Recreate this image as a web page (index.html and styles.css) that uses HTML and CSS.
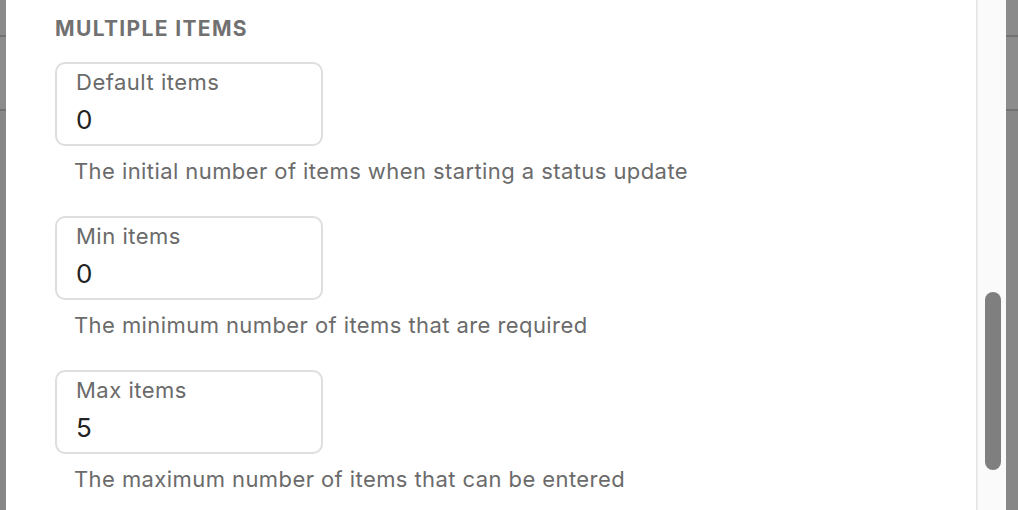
FILE: index.html
```html
<!DOCTYPE html>
<html lang="en">
<head>
<meta charset="utf-8">
<title>Multiple items</title>
<link rel="stylesheet" href="styles.css">
</head>
<body>
<div class="backdrop">
  <div class="seg seg-top"></div>
  <div class="seg seg-mid"></div>
  <div class="seg seg-rest"></div>
</div>
<main class="panel">
  <h2 class="section-title">MULTIPLE ITEMS</h2>
  <div class="field">
    <div class="box">
      <div class="label">Default items</div>
      <div class="value">0</div>
    </div>
    <p class="help">The initial number of items when starting a status update</p>
  </div>
  <div class="field">
    <div class="box">
      <div class="label">Min items</div>
      <div class="value">0</div>
    </div>
    <p class="help">The minimum number of items that are required</p>
  </div>
  <div class="field">
    <div class="box">
      <div class="label">Max items</div>
      <div class="value">5</div>
    </div>
    <p class="help">The maximum number of items that can be entered</p>
  </div>
</main>
<div class="track">
  <div class="thumb"></div>
</div>
<div class="backdrop backdrop-right">
  <div class="seg seg-top"></div>
  <div class="seg seg-mid"></div>
  <div class="seg seg-rest"></div>
</div>
</body>
</html>
```

FILE: styles.css
```css
html, body {
  margin: 0;
  padding: 0;
}
body {
  display: flex;
  height: 510px;
  overflow: hidden;
  background: #878787;
  font-family: Inter, "Noto Sans", sans-serif;
}
.backdrop {
  width: 6px;
  flex: none;
  display: flex;
  flex-direction: column;
  background: #878787;
}
.backdrop-right {
  width: 12px;
}
.seg-top {
  height: 35px;
  border-bottom: 2px solid #727272;
  background: #8a8a8a;
}
.seg-mid {
  height: 72px;
  border-bottom: 2px solid #727272;
  background: #8c8c8c;
}
.seg-rest {
  flex: 1;
}
.panel {
  flex: 1;
  background: #ffffff;
  padding: 17px 0 0 49px;
  border-right: 1px solid #e6e6e6;
}
.section-title {
  margin: 0 0 21px 0;
  font-size: 21px;
  line-height: 24px;
  font-weight: 700;
  color: #717171;
  letter-spacing: 1.35px;
}
.field {
  margin-bottom: 33px;
}
.box {
  width: 264px;
  height: 80px;
  box-sizing: content-box;
  border: 2px solid #dedede;
  border-radius: 10px;
  padding: 0;
}
.label {
  padding: 6px 0 0 19px;
  font-size: 22px;
  line-height: 24px;
  color: #6a6a6a;
  letter-spacing: 0.5px;
}
.value {
  padding: 10px 0 0 19px;
  font-size: 26px;
  line-height: 32px;
  color: #222222;
}
.help {
  margin: 13px 0 0 19px;
  font-size: 22px;
  line-height: 24px;
  color: #6b6b6b;
  letter-spacing: 0.42px;
}
.track {
  width: 29px;
  flex: none;
  background: #fafafa;
  border-left: 1px solid #ececec;
  padding: 292px 0 0 7px;
  box-sizing: border-box;
}
.thumb {
  width: 16px;
  height: 178px;
  border-radius: 8px;
  background: #7f7f7f;
}
```
